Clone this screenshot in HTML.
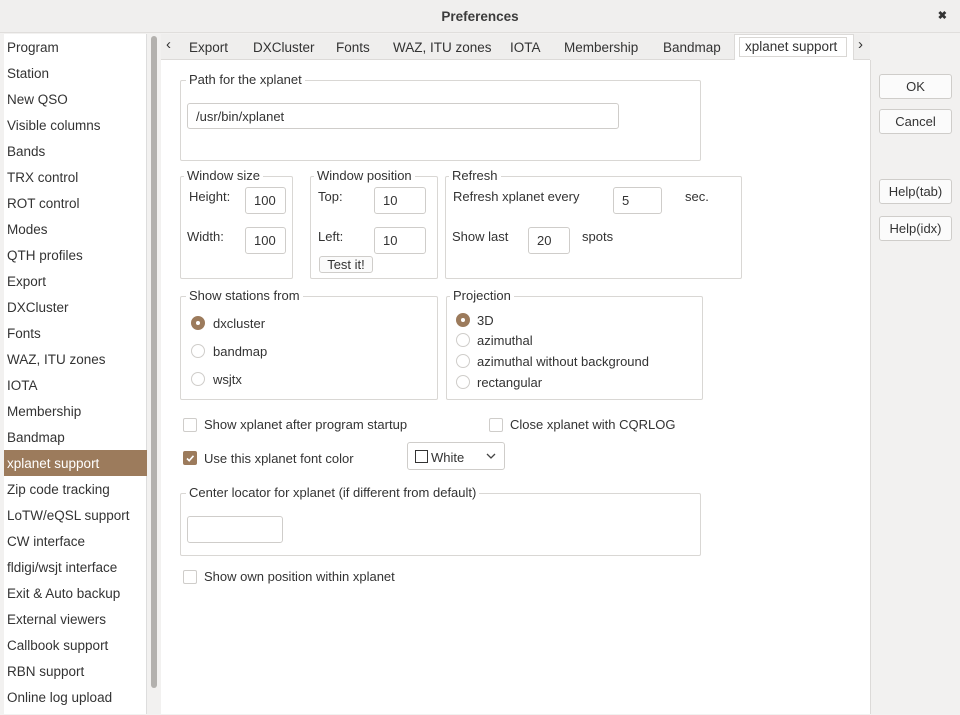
<!DOCTYPE html>
<html><head><style>
*{box-sizing:border-box;margin:0;padding:0}
body{width:960px;height:715px;background:#f2f1f0;font-family:"Liberation Sans",sans-serif;font-size:13px;color:#333;position:relative;overflow:hidden}
.a{position:absolute;white-space:nowrap}
.title{left:0;top:0;width:960px;height:33px;background:#f0efee;border-bottom:1px solid #e0dedc;text-align:center;line-height:33px;font-weight:bold;font-size:13.5px;color:#3c3c3c}
.list{left:4px;top:34px;width:143px;height:680px;background:#fff;border-right:1px solid #ddd}
.li{position:absolute;left:0;width:143px;height:26px;line-height:27px;padding-left:3px;font-size:13.5px;color:#333}
.sel{background:#9c7b5c;color:#fff}
.fs{position:absolute;border:1px solid #d9d7d4;border-radius:2px}
.lg{position:absolute;top:-9px;left:5px;background:#fff;padding:0 3px;font-size:13px;color:#333;line-height:16px}
.in{position:absolute;background:#fff;border:1px solid #cfcdca;border-radius:3px;height:27px;line-height:26px;padding-left:8px;font-size:13px}
.btn{position:absolute;background:#fbfbfb;border:1px solid #cfcdca;border-radius:3px;text-align:center;font-size:13px;color:#333}
.rb{position:absolute;width:14px;height:14px;border:1px solid #cfcdca;border-radius:50%;background:#fff}
.rb.on{background:#9c7b5c;border-color:#9c7b5c}
.rb.on::after{content:"";position:absolute;left:4px;top:4px;width:4px;height:4px;border-radius:50%;background:#fff}
.cb{position:absolute;width:14px;height:14px;border:1px solid #cfcdca;border-radius:2px;background:#fff}
.t{position:absolute;white-space:nowrap;font-size:13px;color:#333}
.tb{position:absolute;white-space:nowrap;font-size:13.5px;color:#333;top:40px}
</style></head><body>
<div class="a title">Preferences</div>
<div class="a" style="right:13px;top:9px;font-size:11px;font-weight:bold;color:#333">✖</div>
<div class="a list">
<div class="li" style="top:0">Program</div>
<div class="li" style="top:26px">Station</div>
<div class="li" style="top:52px">New QSO</div>
<div class="li" style="top:78px">Visible columns</div>
<div class="li" style="top:104px">Bands</div>
<div class="li" style="top:130px">TRX control</div>
<div class="li" style="top:156px">ROT control</div>
<div class="li" style="top:182px">Modes</div>
<div class="li" style="top:208px">QTH profiles</div>
<div class="li" style="top:234px">Export</div>
<div class="li" style="top:260px">DXCluster</div>
<div class="li" style="top:286px">Fonts</div>
<div class="li" style="top:312px">WAZ, ITU zones</div>
<div class="li" style="top:338px">IOTA</div>
<div class="li" style="top:364px">Membership</div>
<div class="li" style="top:390px">Bandmap</div>
<div class="li sel" style="top:416px">xplanet support</div>
<div class="li" style="top:442px">Zip code tracking</div>
<div class="li" style="top:468px">LoTW/eQSL support</div>
<div class="li" style="top:494px">CW interface</div>
<div class="li" style="top:520px">fldigi/wsjt interface</div>
<div class="li" style="top:546px">Exit &amp; Auto backup</div>
<div class="li" style="top:572px">External viewers</div>
<div class="li" style="top:598px">Callbook support</div>
<div class="li" style="top:624px">RBN support</div>
<div class="li" style="top:650px">Online log upload</div>
</div>
<div class="a" style="left:151px;top:36px;width:6px;height:652px;background:#b3b1ae;border-radius:3px"></div>
<!-- tabs -->
<div class="a" style="left:161px;top:34px;width:709px;height:26px;background:#efeeed;border-bottom:1px solid #dcdad8"></div>
<div class="t" style="left:166px;top:36px;font-size:15px">‹</div>
<div class="tb" style="left:189px">Export</div>
<div class="tb" style="left:253px">DXCluster</div>
<div class="tb" style="left:336px">Fonts</div>
<div class="tb" style="left:393px">WAZ, ITU zones</div>
<div class="tb" style="left:510px">IOTA</div>
<div class="tb" style="left:564px">Membership</div>
<div class="tb" style="left:663px">Bandmap</div>
<div class="a" style="left:734px;top:34px;width:120px;height:27px;background:#fff;border:1px solid #dcdad8;border-bottom:none"></div>
<div class="a" style="left:739px;top:37px;width:108px;height:20px;border:1px solid #d9d7d4"></div>
<div class="t" style="left:745px;top:39px;font-size:13.5px">xplanet support</div>
<div class="t" style="left:858px;top:36px;font-size:15px">›</div>
<div class="a" style="left:161px;top:60px;width:710px;height:654px;background:#fff;border-right:1px solid #dcdad8"></div>
<!-- path -->
<div class="fs" style="left:180px;top:80px;width:521px;height:81px"><span class="lg">Path for the xplanet</span></div>
<div class="in" style="left:187px;top:103px;width:432px;height:26px">/usr/bin/xplanet</div>
<!-- window size -->
<div class="fs" style="left:180px;top:176px;width:113px;height:103px"><span class="lg" style="left:3px">Window size</span></div>
<div class="t" style="left:189px;top:189px">Height:</div>
<div class="t" style="left:187px;top:229px">Width:</div>
<div class="in" style="left:245px;top:187px;width:41px">100</div>
<div class="in" style="left:245px;top:227px;width:41px">100</div>
<!-- window pos -->
<div class="fs" style="left:310px;top:176px;width:128px;height:103px"><span class="lg" style="left:3px">Window position</span></div>
<div class="t" style="left:318px;top:189px">Top:</div>
<div class="t" style="left:318px;top:229px">Left:</div>
<div class="in" style="left:374px;top:187px;width:52px">10</div>
<div class="in" style="left:374px;top:227px;width:52px">10</div>
<div class="btn" style="left:319px;top:256px;width:54px;height:17px;line-height:15px">Test it!</div>
<!-- refresh -->
<div class="fs" style="left:445px;top:176px;width:297px;height:103px"><span class="lg" style="left:3px">Refresh</span></div>
<div class="t" style="left:453px;top:189px">Refresh xplanet every</div>
<div class="in" style="left:613px;top:187px;width:49px">5</div>
<div class="t" style="left:685px;top:189px">sec.</div>
<div class="t" style="left:452px;top:229px">Show last</div>
<div class="in" style="left:528px;top:227px;width:42px">20</div>
<div class="t" style="left:582px;top:229px">spots</div>
<!-- stations -->
<div class="fs" style="left:180px;top:296px;width:258px;height:104px"><span class="lg" style="left:5px">Show stations from</span></div>
<div class="rb on" style="left:191px;top:316px"></div><div class="t" style="left:213px;top:316px">dxcluster</div>
<div class="rb" style="left:191px;top:344px"></div><div class="t" style="left:213px;top:344px">bandmap</div>
<div class="rb" style="left:191px;top:372px"></div><div class="t" style="left:213px;top:372px">wsjtx</div>
<!-- projection -->
<div class="fs" style="left:446px;top:296px;width:257px;height:104px"><span class="lg" style="left:3px">Projection</span></div>
<div class="rb on" style="left:456px;top:313px"></div><div class="t" style="left:477px;top:313px">3D</div>
<div class="rb" style="left:456px;top:333px"></div><div class="t" style="left:477px;top:333px">azimuthal</div>
<div class="rb" style="left:456px;top:354px"></div><div class="t" style="left:477px;top:354px">azimuthal without background</div>
<div class="rb" style="left:456px;top:375px"></div><div class="t" style="left:477px;top:375px">rectangular</div>
<!-- checks -->
<div class="cb" style="left:183px;top:418px"></div><div class="t" style="left:204px;top:417px">Show xplanet after program startup</div>
<div class="cb" style="left:489px;top:418px"></div><div class="t" style="left:510px;top:417px">Close xplanet with CQRLOG</div>
<div class="cb" style="left:183px;top:451px;background:#9c7b5c;border-color:#9c7b5c"><svg width="12" height="12" style="position:absolute;left:0;top:0"><path d="M3 6.5 L5.2 8.7 L9.5 3.8" stroke="#fff" stroke-width="1.6" fill="none"/></svg></div>
<div class="t" style="left:204px;top:451px">Use this xplanet font color</div>
<div class="btn" style="left:407px;top:442px;width:98px;height:28px;background:#fff"></div>
<div class="a" style="left:415px;top:450px;width:13px;height:13px;border:1px solid #333"></div>
<div class="t" style="left:431px;top:450px">White</div>
<svg class="a" style="left:486px;top:452px" width="10" height="8"><path d="M1 2 L5 6 L9 2" stroke="#444" stroke-width="1.3" fill="none"/></svg>
<!-- center locator -->
<div class="fs" style="left:180px;top:493px;width:521px;height:63px"><span class="lg">Center locator for xplanet (if different from default)</span></div>
<div class="in" style="left:187px;top:516px;width:96px;height:27px"></div>
<div class="cb" style="left:183px;top:570px"></div><div class="t" style="left:204px;top:569px">Show own position within xplanet</div>
<!-- right buttons -->
<div class="btn" style="left:879px;top:74px;width:73px;height:25px;line-height:23px">OK</div>
<div class="btn" style="left:879px;top:109px;width:73px;height:25px;line-height:23px">Cancel</div>
<div class="btn" style="left:879px;top:179px;width:73px;height:25px;line-height:23px">Help(tab)</div>
<div class="btn" style="left:879px;top:216px;width:73px;height:25px;line-height:23px">Help(idx)</div>
</body></html>
